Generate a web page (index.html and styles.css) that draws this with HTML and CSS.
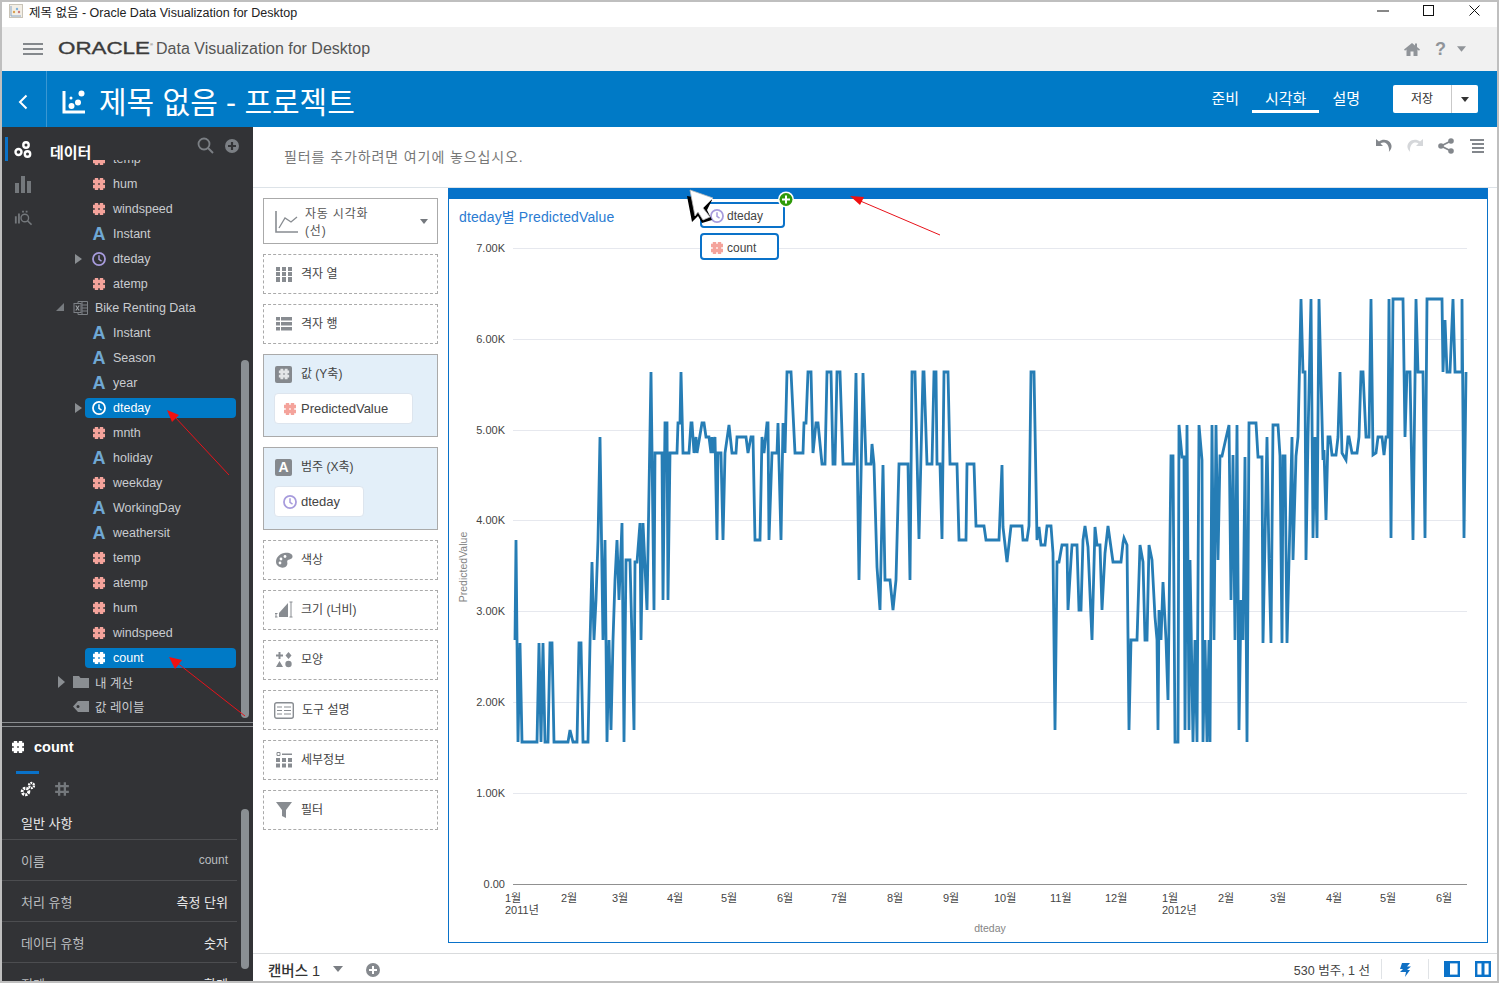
FILE: index.html
```html
<!DOCTYPE html>
<html lang="ko">
<head>
<meta charset="utf-8">
<title>제목 없음 - Oracle Data Visualization for Desktop</title>
<link rel="stylesheet" href="styles.css">
</head>
<body>
<svg class="sprite" aria-hidden="true">
  <symbol id="i-hash" viewBox="0 0 14 14"><path d="M4.500 1v12M9.500 1v12M1 4.500h12M1 9.500h12" fill="none" stroke="currentColor" stroke-width="3.400"/></symbol>
  <symbol id="i-hash-thin" viewBox="0 0 14 14"><path d="M4.500 1v12M9.500 1v12M1 4.500h12M1 9.500h12" fill="none" stroke="currentColor" stroke-width="2"/></symbol>
  <symbol id="i-clock" viewBox="0 0 16 16"><circle cx="8" cy="8" r="6.900" fill="none" stroke="currentColor" stroke-width="2"/><path d="M8 3.800v4.600l2.900 1.900" fill="none" stroke="currentColor" stroke-width="1.700"/></symbol>
</svg>
<div class="window">
  <header class="titlebar">
    <svg class="appicon" viewBox="0 0 14 14"><rect x=".5" y=".5" width="13" height="13" fill="#f3efe6" stroke="#c9c4b8"/><path d="M2 2v10h10" fill="none" stroke="#8aa7c8"/><circle cx="5" cy="8" r="1.200" fill="#d9a04e"/><circle cx="8" cy="5" r="1.200" fill="#7fb2dc"/><circle cx="10" cy="8" r="1.200" fill="#c77"/></svg>
    <span class="titletext">제목 없음 - Oracle Data Visualization for Desktop</span>
    <span class="winctl">
      <svg viewBox="0 0 12 12"><path d="M0 6h12" stroke="#111" fill="none"/></svg>
      <svg viewBox="0 0 12 12"><rect x=".5" y=".5" width="10" height="10" stroke="#111" fill="none"/></svg>
      <svg viewBox="0 0 12 12"><path d="M.5 .5l10 10M10.500 .5l-10 10" stroke="#111" fill="none"/></svg>
    </span>
  </header>
  <div class="apphead">
    <span class="burger"><i></i><i></i><i></i></span>
    <svg class="oracle" viewBox="0 0 97 16"><text x="0" y="13" textLength="92" lengthAdjust="spacingAndGlyphs">ORACLE</text><text class="reg" x="92" y="5">®</text></svg>
    <span class="appname">Data Visualization for Desktop</span>
    <span class="headicons">
      <svg class="h-home" viewBox="0 0 16 14"><path d="M8 1L0 7.600l1 1.100 1.500-1.200V14h4V9.500h3V14h4V7.500L15 8.700l1-1.100-3-2.500V1.500h-2v1.900z" fill="#909499"/></svg>
      <span class="h-q">?</span>
      <svg class="h-car" viewBox="0 0 10 6"><path d="M0 0h10L5 6z" fill="#909499"/></svg>
    </span>
  </div>
  <div class="projbar">
    <div class="back"><svg viewBox="0 0 10 16"><path d="M8.500 1.500L2 8l6.500 6.500" fill="none" stroke="#fff" stroke-width="2"/></svg></div>
    <svg class="projicon" viewBox="0 0 24 24"><path d="M2 1v21h21" fill="none" stroke="#fff" stroke-width="3"/><circle cx="9.500" cy="16" r="3" fill="#fff"/><circle cx="16" cy="12.500" r="3" fill="#fff"/><circle cx="19.500" cy="3.500" r="3" fill="#fff"/><circle cx="9" cy="8" r="1.500" fill="#fff"/></svg>
    <h1 class="projtitle">제목 없음 - 프로젝트</h1>
    <nav class="projnav">
      <a>준비</a><a class="on">시각화</a><a>설명</a>
    </nav>
    <div class="savebtn"><span class="savetxt">저장</span><span class="savecar"><svg viewBox="0 0 8 5"><path d="M0 0h8L4 5z" fill="#333"/></svg></span></div>
  </div>
  <div class="main">
    <aside class="side">
      <div class="side-top">
        <div class="rail">
          <div class="rail-item active"><svg viewBox="0 0 18 18"><g fill="none" stroke="#fff" stroke-width="2.400"><circle cx="4.500" cy="11" r="3"/><circle cx="13.500" cy="13" r="2.700"/><circle cx="12" cy="4" r="2.700"/></g></svg></div>
          <div class="rail-item"><svg viewBox="0 0 18 18"><path d="M1 8h4v10H1zM7 1h4v17H7zM13 6h4v12h-4z" fill="#74787c"/></svg></div>
          <div class="rail-item"><svg viewBox="0 0 20 20"><path d="M1 8h2v8H1zM4.500 5h2v11h-2z" fill="#74787c"/><circle cx="12" cy="10" r="4.200" fill="none" stroke="#74787c" stroke-width="1.500"/><path d="M15 13l4.500 4.500" stroke="#74787c" stroke-width="1.800"/><path d="M9 2h2v2H9zM13 2h2v2h-2z" fill="#74787c"/></svg></div>
        </div>
        <div class="treepane">
          <div class="treehead">
            <span class="treetitle">데이터</span>
            <svg class="th-search" viewBox="0 0 17 17"><circle cx="7" cy="7" r="5.500" fill="none" stroke="#7b7f84" stroke-width="1.800"/><path d="M11 11l5 5" stroke="#7b7f84" stroke-width="2"/></svg>
            <svg class="th-plus" viewBox="0 0 14 14"><circle cx="7" cy="7" r="7" fill="#7b7f84"/><path d="M7 3v8M3 7h8" stroke="#323336" stroke-width="2.200"/></svg>
          </div>
          <div class="tree">
            <div class="row"><span class="slot"></span><span class="item"><svg class="ic hash"><use href="#i-hash"/></svg>temp</span></div>
            <div class="row"><span class="slot"></span><span class="item"><svg class="ic hash"><use href="#i-hash"/></svg>hum</span></div>
            <div class="row"><span class="slot"></span><span class="item"><svg class="ic hash"><use href="#i-hash"/></svg>windspeed</span></div>
            <div class="row"><span class="slot"></span><span class="item"><b class="ic attr">A</b>Instant</span></div>
            <div class="row"><span class="slot arrow"></span><span class="item"><svg class="ic clock"><use href="#i-clock"/></svg>dteday</span></div>
            <div class="row"><span class="slot"></span><span class="item"><svg class="ic hash"><use href="#i-hash"/></svg>atemp</span></div>
            <div class="row top"><span class="tslot open"></span><svg class="fic" viewBox="0 0 16 16"><path d="M5 1.500h6l3.500 0v13H5zM9 1.500v13M9 5h5.500M9 8h5.500M9 11h5.500" fill="none" stroke="#7c8085"/><rect x="1" y="3.500" width="7" height="9" fill="#323336" stroke="#7c8085"/><path d="M2.800 5.500l3.400 5M6.200 5.500l-3.400 5" stroke="#9ca0a4" stroke-width="1.200"/></svg>Bike Renting Data</div>
            <div class="row"><span class="slot"></span><span class="item"><b class="ic attr">A</b>Instant</span></div>
            <div class="row"><span class="slot"></span><span class="item"><b class="ic attr">A</b>Season</span></div>
            <div class="row"><span class="slot"></span><span class="item"><b class="ic attr">A</b>year</span></div>
            <div class="row"><span class="slot arrow"></span><span class="item sel"><svg class="ic white"><use href="#i-clock"/></svg>dteday</span></div>
            <div class="row"><span class="slot"></span><span class="item"><svg class="ic hash"><use href="#i-hash"/></svg>mnth</span></div>
            <div class="row"><span class="slot"></span><span class="item"><b class="ic attr">A</b>holiday</span></div>
            <div class="row"><span class="slot"></span><span class="item"><svg class="ic hash"><use href="#i-hash"/></svg>weekday</span></div>
            <div class="row"><span class="slot"></span><span class="item"><b class="ic attr">A</b>WorkingDay</span></div>
            <div class="row"><span class="slot"></span><span class="item"><b class="ic attr">A</b>weathersit</span></div>
            <div class="row"><span class="slot"></span><span class="item"><svg class="ic hash"><use href="#i-hash"/></svg>temp</span></div>
            <div class="row"><span class="slot"></span><span class="item"><svg class="ic hash"><use href="#i-hash"/></svg>atemp</span></div>
            <div class="row"><span class="slot"></span><span class="item"><svg class="ic hash"><use href="#i-hash"/></svg>hum</span></div>
            <div class="row"><span class="slot"></span><span class="item"><svg class="ic hash"><use href="#i-hash"/></svg>windspeed</span></div>
            <div class="row"><span class="slot"></span><span class="item sel"><svg class="ic white"><use href="#i-hash"/></svg>count</span></div>
            <div class="row top"><span class="tslot closed"></span><svg class="fic" viewBox="0 0 16 16"><path d="M0 2h6l1.500 2H16v10H0z" fill="#8a8e92"/></svg>내 계산</div>
            <div class="row top"><span class="tslot"></span><svg class="fic" viewBox="0 0 16 16"><path d="M5 2h11v11H5L0 7.500z" fill="#8a8e92"/><circle cx="5" cy="7.500" r="1.500" fill="#323336"/></svg>값 레이블</div>
          </div>
          <span class="sbar sbar-tree"></span>
        </div>
      </div>
      <div class="props">
        <div class="ph"><svg class="ic white phic"><use href="#i-hash"/></svg><span>count</span></div>
        <div class="tabs">
          <span class="tab active"><svg viewBox="0 0 16 16"><circle cx="5.500" cy="10.500" r="3.300" fill="none" stroke="#fff" stroke-width="3" stroke-dasharray="2.200 1"/><circle cx="11.500" cy="4.500" r="2.500" fill="none" stroke="#fff" stroke-width="2.400" stroke-dasharray="1.800 .8"/></svg></span>
          <span class="tab"><svg class="ic gray"><use href="#i-hash-thin"/></svg></span>
        </div>
        <div class="prow head"><span>일반 사항</span></div>
        <div class="prow"><span>이름</span><span class="val dim">count</span></div>
        <div class="prow"><span>처리 유형</span><span class="val">측정 단위</span></div>
        <div class="prow"><span>데이터 유형</span><span class="val">숫자</span></div>
        <div class="prow"><span>집계</span><span class="val">합계</span></div>
        <span class="sbar sbar-props"></span>
      </div>
    </aside>
    <section class="content">
      <div class="filterbar">
        <span class="filtertext">필터를 추가하려면 여기에 놓으십시오.</span>
        <span class="tools">
          <svg viewBox="0 0 18 16"><path d="M1 1v7h7L5.500 5.500C8 3.500 13 4 14 11c.2 1 .2 2-.2 3 3.200-3 3.800-7 .9-10C12 1.200 7 1 4 3.500z" fill="#83878c"/></svg>
          <svg viewBox="0 0 18 16"><path d="M17 1v7h-7l2.500-2.500C10 3.500 5 4 4 11c-.2 1-.2 2 .2 3-3.200-3-3.800-7-.9-10C6 1.200 11 1 14 3.500z" fill="#d5d7da"/></svg>
          <svg viewBox="0 0 18 16"><path d="M14 3L4 8l10 5" fill="none" stroke="#83878c" stroke-width="1.800"/><circle cx="14" cy="3" r="2.800" fill="#83878c"/><circle cx="4" cy="8" r="2.800" fill="#83878c"/><circle cx="14" cy="13" r="2.800" fill="#83878c"/></svg>
          <svg viewBox="0 0 18 16"><path d="M2 2h14M4 6h12M4 10h12M4 14h12" stroke="#83878c" stroke-width="2"/></svg>
        </span>
      </div>
      <div class="work">
        <div class="grammar">
          <div class="charttype">
            <svg class="ct-ic" viewBox="0 0 23 23"><path d="M1 1v21h22" fill="none" stroke="#888c91" stroke-width="1.600"/><path d="M4 18l6-10 6 4 6-5" fill="none" stroke="#888c91" stroke-width="1.300"/></svg>
            <span class="ct-text">자동 시각화<br>(선)</span>
            <svg class="ct-car" viewBox="0 0 8 5"><path d="M0 0h8L4 5z" fill="#75797e"/></svg>
          </div>
          <div class="well"><svg class="w-ic" viewBox="0 0 18 18"><path d="M1 2h4v4H1zM7 2h4v4H7zM13 2h4v4h-4zM1 7h4v4H1zM7 7h4v4H7zM13 7h4v4h-4zM1 12h4v5H1zM7 12h4v5H7zM13 12h4v5h-4z" fill="#888c91"/></svg><span>격자 열</span></div>
          <div class="well"><svg class="w-ic" viewBox="0 0 18 18"><path d="M1 2h4v3.500H1zM6 2h11v3.500H6zM1 7h4v3.500H1zM6 7h11v3.500H6zM1 12h4v3.500H1zM6 12h11v3.500H6z" fill="#888c91"/></svg><span>격자 행</span></div>
          <div class="well filled">
            <div class="well-head"><span class="sq"><svg class="ic lite"><use href="#i-hash"/></svg></span><span>값 (Y축)</span></div>
            <div class="pill wide"><svg class="ic hash"><use href="#i-hash"/></svg>PredictedValue</div>
          </div>
          <div class="well filled">
            <div class="well-head"><span class="sq"><b>A</b></span><span>범주 (X축)</span></div>
            <div class="pill narrow"><svg class="ic clock"><use href="#i-clock"/></svg>dteday</div>
          </div>
          <div class="well"><svg class="w-ic" viewBox="0 0 18 18"><path d="M9 2c5-1 9 1 8.500 4-.4 2.500-4 2-5 3.500s1 3-1 5.500-6.500 2-9-.5S1 7 3.500 5 6 2.500 9 2z" fill="#888c91"/><circle cx="6" cy="8" r="1.400" fill="#fff"/><circle cx="10" cy="5.500" r="1.400" fill="#fff"/><circle cx="5" cy="12" r="1.400" fill="#fff"/></svg><span>색상</span></div>
          <div class="well"><svg class="w-ic" viewBox="0 0 18 18"><path d="M4 12L13 2v14H4z" fill="#888c91"/><path d="M1 12.500v3.500M0 12.500h2.500M0 16h2.500M16 1v15M14.500 1h3M14.500 16h3" stroke="#888c91" fill="none"/></svg><span>크기 (너비)</span></div>
          <div class="well"><svg class="w-ic" viewBox="0 0 18 18"><path d="M3.500 1h2v2.500H8v2H5.500V8h-2V5.500H1v-2h2.500zM13.500 1l3 3.500-3 3.500-3-3.500zM4.500 10l3.500 6H1z" fill="#888c91"/><circle cx="13.500" cy="13" r="3.200" fill="#888c91"/></svg><span>모양</span></div>
          <div class="well"><svg class="w-ic tip" viewBox="0 0 20 17"><rect x=".7" y=".7" width="18.600" height="15.600" rx="2" fill="none" stroke="#888c91" stroke-width="1.400"/><path d="M3 5h5M3 8.500h5M3 12h5M10 5h7M10 8.500h7M10 12h7" stroke="#888c91"/></svg><span>도구 설명</span></div>
          <div class="well"><svg class="w-ic" viewBox="0 0 18 18"><path d="M2 1.500h3v3H2z" fill="none" stroke="#888c91"/><path d="M7 2.500h10v1.400H7zM1 7h4v4H1zM7 7h4v4H7zM13 7h4v4h-4zM1 12.500h4v4H1zM7 12.500h4v4H7zM13 12.500h4v4h-4z" fill="#888c91"/></svg><span>세부정보</span></div>
          <div class="well"><svg class="w-ic" viewBox="0 0 18 18"><path d="M1 1h16l-6 8v8l-4-2V9z" fill="#888c91"/></svg><span>필터</span></div>
        </div>
        <div class="canvas">
          <div class="canvas-bar"></div>
          <svg class="chart" viewBox="449 199 1038 743">
            <g class="grid">
              <path d="M513 248.500H1467M513 339.500H1467M513 430.500H1467M513 520.500H1467M513 611.500H1467M513 702.500H1467M513 793.500H1467"/>
            </g>
            <path class="axis" d="M513 884.500H1467"/>
            <text class="title" x="459" y="222">dteday별 PredictedValue</text>
            <g class="ylab">
              <text x="505" y="252">7.00K</text><text x="505" y="343">6.00K</text><text x="505" y="434">5.00K</text><text x="505" y="524">4.00K</text><text x="505" y="615">3.00K</text><text x="505" y="706">2.00K</text><text x="505" y="797">1.00K</text><text x="505" y="888">0.00</text>
            </g>
            <text class="ytitle" transform="translate(467 567) rotate(-90)">PredictedValue</text>
            <g class="xlab">
              <text x="505" y="902">1월</text><text x="505" y="914">2011년</text><text x="561" y="902">2월</text><text x="612" y="902">3월</text><text x="667" y="902">4월</text><text x="721" y="902">5월</text><text x="777" y="902">6월</text><text x="831" y="902">7월</text><text x="887" y="902">8월</text><text x="943" y="902">9월</text><text x="994" y="902">10월</text><text x="1050" y="902">11월</text><text x="1105" y="902">12월</text><text x="1162" y="902">1월</text><text x="1162" y="914">2012년</text><text x="1218" y="902">2월</text><text x="1270" y="902">3월</text><text x="1326" y="902">4월</text><text x="1380" y="902">5월</text><text x="1436" y="902">6월</text>
            </g>
            <text class="xtitle" x="990" y="932">dteday</text>
            <polyline class="line" points="515,640 516,540 518,742 520,643 522,742 537,742 539,643 541,742 543,643 545,742 548,742 550,643 552,643 554,742 568,742 570,730 573,742 577,742 579,643 581,643 583,742 588,742 590,643 592,562 594,640 596,600 598,540 600,437 603,640 605,540 607,742 609,640 611,730 613,640 615,580 617,540 619,600 622,523 624,742 626,560 630,560 632,640 634,730 635,562 637,562 640,523 641,640 643,523 647,610 651,372 654,610 655,453 662,453 663,600 665,423 667,423 668,600 670,453 677,453 678,423 680,423 681,372 683,453 689,453 691,423 692,423 694,453 696,437 697,453 702,423 704,423 706,437 709,437 711,453 712,437 713,453 715,437 717,540 718,453 721,453 723,540 725,453 729,425 732,453 736,453 737,437 746,437 748,453 751,437 753,437 755,540 760,540 762,437 764,453 767,423 768,423 769,540 772,453 777,453 778,423 781,540 783,423 785,453 787,372 791,372 795,453 803,453 804,423 806,423 808,372 811,372 813,453 816,423 818,423 822,464 825,464 827,372 831,372 833,464 835,464 837,372 840,372 843,464 854,464 856,373 859,580 863,373 866,464 871,464 872,444 874,464 877,567 880,610 883,465 885,580 890,580 893,610 896,580 899,464 908,464 910,580 912,372 915,372 919,539 923,372 924,372 927,464 932,464 934,372 936,372 937,464 940,464 942,539 944,372 948,372 950,464 957,464 959,540 966,540 967,464 974,464 976,526 984,526 986,540 999,540 1002,465 1003,527 1007,562 1011,526 1022,526 1023,540 1027,540 1029,526 1031,372 1034,372 1037,540 1039,527 1041,545 1045,545 1047,526 1051,526 1053,553 1055,730 1057,562 1059,562 1062,545 1067,545 1068,610 1071,560 1072,545 1077,545 1079,610 1081,610 1083,540 1085,526 1088,547 1092,640 1095,527 1097,545 1100,545 1102,610 1105,553 1108,526 1113,562 1121,562 1123,543 1124,538 1127,545 1129,730 1131,640 1137,640 1140,545 1143,562 1145,640 1147,640 1149,545 1152,560 1155,617 1157,640 1158,730 1159,610 1161,640 1163,582 1166,640 1168,700 1171,456 1173,456 1175,742 1178,742 1179,425 1182,457 1184,457 1185,730 1187,425 1189,730 1190,560 1193,742 1195,640 1197,742 1199,425 1202,460 1203,742 1205,640 1207,742 1209,640 1210,742 1212,425 1214,640 1216,425 1218,560 1220,456 1222,456 1226,438 1229,425 1231,600 1233,455 1235,640 1237,425 1239,730 1241,600 1243,640 1245,457 1247,742 1249,423 1256,423 1258,457 1262,457 1263,643 1267,437 1269,560 1271,643 1273,425 1278,425 1280,456 1282,643 1283,456 1285,456 1287,643 1292,437 1293,560 1296,456 1298,437 1301,299 1303,372 1305,372 1306,560 1308,437 1311,299 1313,538 1315,437 1317,538 1319,299 1323,460 1324,450 1326,520 1328,437 1330,437 1332,455 1336,455 1338,437 1340,372 1342,453 1346,460 1348,437 1349,437 1352,453 1357,453 1359,437 1361,372 1363,372 1366,437 1369,437 1371,299 1373,455 1376,453 1378,437 1382,437 1384,455 1386,437 1388,437 1389,299 1391,538 1393,299 1403,299 1405,437 1407,372 1410,372 1413,540 1416,299 1418,372 1423,372 1425,538 1427,299 1442,299 1443,372 1445,320 1447,372 1450,372 1453,299 1455,372 1462,372 1462,299 1464,538 1466,372"/>
          </svg>
          <div class="chip chip-a"><svg class="ic clock"><use href="#i-clock"/></svg>dteday</div>
          <div class="chip chip-b"><svg class="ic hash"><use href="#i-hash"/></svg>count</div>
        </div>
      </div>
      <footer class="footer">
        <span class="cvname">캔버스 1</span>
        <svg class="cvcar" viewBox="0 0 10 6"><path d="M0 0h10L5 6z" fill="#7a7e83"/></svg>
        <svg class="cvplus" viewBox="0 0 14 14"><circle cx="7" cy="7" r="7" fill="#85898e"/><path d="M7 3v8M3 7h8" stroke="#fff" stroke-width="2"/></svg>
        <span class="fstat">530 범주, 1 선</span>
        <span class="fsep"></span>
        <svg class="fbolt" viewBox="0 0 12 14"><path d="M3 0h8L8 3.500h4L8 7h3l-5 7 1-5H1l3-3H1z" fill="#1070c4"/></svg>
        <span class="fsep"></span>
        <svg class="fpanel" viewBox="0 0 16 16"><rect x="1.200" y="1.200" width="13.600" height="13.600" fill="none" stroke="#0a72c9" stroke-width="2.400"/><rect x="1" y="1" width="5" height="14" fill="#0a72c9"/></svg>
        <svg class="fpanel" viewBox="0 0 16 16"><rect x="1.200" y="1.200" width="13.600" height="13.600" fill="none" stroke="#0a72c9" stroke-width="2.400"/><rect x="6.500" y="1" width="3" height="14" fill="#0a72c9"/></svg>
      </footer>
    </section>
  </div>
</div>
<svg class="overlay" viewBox="0 0 1499 983" aria-hidden="true">
  <g class="arrows">
    <path d="M940 235L858 200"/><polygon points="850,196 864,197 860,205"/>
    <path d="M229 475L174 416"/><polygon points="167,410 179,415 172,422"/>
    <path d="M245 716L176 662"/><polygon points="169,657 182,660 175,669"/>
  </g>
  <circle cx="786" cy="199.500" r="8" fill="#fff"/><circle cx="786" cy="199.500" r="6.500" fill="#2f9a0a"/><path d="M786 195.500v8M782 199.500h8" stroke="#fff" stroke-width="2"/>
  <polygon points="687,196 692,222 698,216 702,223 712,220 707,210 712,200" fill="#000"/>
  <polygon points="690,190 713,198 703,208 710,217 703,220 698,212 695,216" fill="#fff" stroke="#bbb" stroke-width=".8"/>
</svg>
</body>
</html>
```
FILE: styles.css
```css
* { box-sizing: border-box; }
html, body { margin: 0; padding: 0; height: 100%; overflow: hidden; }
body { font-family: "Liberation Sans", "Noto Sans CJK KR", sans-serif; font-size: 12px; color: #333; background: #fff; position: relative; }
.sprite { position: absolute; width: 0; height: 0; }
.window { width: 1499px; height: 983px; border: 2px solid #bfbfbf; display: flex; flex-direction: column; background: #fff; }

.titlebar { height: 25px; display: flex; align-items: center; padding: 0 0 7px 7px; flex: none; }
.appicon { width: 14px; height: 14px; margin-right: 6px; }
.titletext { font-size: 12.500px; color: #222; }
.winctl { margin-left: auto; display: flex; align-items: center; padding-right: 16px; gap: 34px; }
.winctl svg { width: 12px; height: 12px; display: block; }

.apphead { height: 44px; background: #f1f1f1; display: flex; align-items: center; flex: none; padding-left: 21px; }
.burger { width: 20px; display: flex; flex-direction: column; gap: 3px; margin-right: 15px; }
.burger i { display: block; height: 2px; background: #84888c; }
.oracle { width: 97px; height: 16px; margin-right: 1px; overflow: visible; }
.oracle text { font-size: 17px; font-weight: 400; fill: #3b3b3b; stroke: #3b3b3b; stroke-width: .35px; font-family: "Liberation Sans", sans-serif; }
.oracle .reg { font-size: 4px; stroke: none; }
.appname { font-size: 16px; color: #555; }
.headicons { margin-left: auto; display: flex; align-items: center; padding-right: 31px; }
.h-home { width: 16px; height: 14px; margin-right: 15px; margin-left: -1px; }
.h-q { font-size: 18px; font-weight: 700; color: #909499; margin-right: 11px; line-height: 1; }
.h-car { width: 9px; height: 6px; }

.projbar { height: 56px; background: #007ac6; display: flex; align-items: center; flex: none; color: #fff; }
.back { width: 45px; height: 56px; border-right: 1px solid #3a97d2; display: flex; align-items: center; justify-content: center; }
.back svg { width: 10px; height: 16px; margin-top: 6px; margin-right: 3px; }
.projicon { width: 24px; height: 24px; margin: 5px 13px 0 15px; }
.projtitle { font-size: 30px; font-weight: 400; margin: 8px 0 0; line-height: 1; }
.projnav { margin-left: auto; display: flex; height: 56px; align-items: center; }
.projnav a { font-size: 15px; color: #fff; padding: 0 13px; height: 28px; line-height: 28px; border-bottom: 3px solid transparent; }
.projnav a.on { border-bottom-color: #fff; }
.savebtn { width: 85px; height: 28px; background: #fff; border-radius: 2px; display: flex; margin: 0 19px 0 20px; color: #333; }
.savetxt { width: 59px; border-right: 1px solid #c9c9c9; text-align: center; line-height: 28px; font-size: 12px; }
.savecar { flex: 1; display: flex; align-items: center; justify-content: center; }
.savecar svg { width: 8px; height: 5px; }

.main { flex: 1; display: flex; min-height: 0; }
.side { width: 251px; flex: none; background: #323336; display: flex; flex-direction: column; color: #c9ccd0; position: relative; }
.side-top { height: 596px; flex: none; display: flex; border-bottom: 1px solid #8a8d90; }
.rail { width: 43px; flex: none; padding-top: 6px; }
.rail-item { height: 34px; display: flex; align-items: center; padding-left: 12px; position: relative; }
.rail-item svg { width: 18px; height: 18px; }
.rail-item.active::before { content: ""; position: absolute; left: 3px; top: 4px; width: 3px; height: 24px; background: #0a72c9; }
.treepane { flex: 1; min-width: 0; display: flex; flex-direction: column; position: relative; }
.treehead { height: 33px; flex: none; display: flex; align-items: center; background: #323336; position: relative; padding-left: 5px; padding-top: 18px; overflow: visible; z-index: 1; }
.treetitle { font-size: 15px; font-weight: 700; color: #fff; line-height: 15px; }
.th-search { width: 17px; height: 17px; margin-left: auto; margin-top: -14px; margin-right: 11px; }
.th-plus { width: 14px; height: 14px; margin-right: 14px; margin-top: -14px; }
.tree { flex: 1; overflow: hidden; }
.row { height: 25px; display: flex; align-items: center; padding-right: 17px; font-size: 12.500px; color: #c9ccd0; white-space: nowrap; }
.row:first-child { margin-top: -14px; }
.slot { width: 40px; height: 20px; flex: none; position: relative; }
.slot.arrow::after { content: ""; position: absolute; left: 30px; top: 5px; border-left: 7px solid #8a8e92; border-top: 5px solid transparent; border-bottom: 5px solid transparent; }
.item { flex: 1; height: 20px; display: flex; align-items: center; padding-left: 7px; border-radius: 4px; }
.item.sel { background: #007ac6; color: #fff; }
.ic { width: 14px; height: 14px; flex: none; margin-right: 7px; display: inline-block; }
.hash { color: #f4a39b; }
.clock { color: #a79bdc; }
.white { color: #fff; }
.gray { color: #74787c; margin-right: 0; }
.lite { color: #e3e5e7; margin-right: 0; width: 12px; height: 12px; }
.attr { color: #6fa8d4; font-size: 18px; line-height: 14px; font-weight: 700; text-align: center; }
.row.top { padding-left: 10px; height: 24px; }
.row.top:last-child { height: 25px; }
.tslot { width: 18px; height: 14px; flex: none; position: relative; }
.tslot.open::after { content: ""; position: absolute; left: 1px; top: 2px; border-left: 8px solid transparent; border-bottom: 8px solid #777b7f; }
.tslot.closed::after { content: ""; position: absolute; left: 3px; top: 1px; border-left: 7px solid #8a8e92; border-top: 6px solid transparent; border-bottom: 6px solid transparent; }
.fic { width: 16px; height: 16px; flex: none; margin-right: 6px; }
.sbar { position: absolute; width: 8px; background: #8a8f93; border-radius: 4px; }
.sbar-tree { left: 196px; top: 233px; height: 358px; }
.sbar-props { left: 239px; top: 82px; height: 160px; }

.props { flex: 1; min-height: 0; margin-top: 3px; border-top: 1px solid #8a8d90; overflow: hidden; position: relative; }
.ph { height: 44px; display: flex; align-items: center; padding: 0 0 4px 9px; font-size: 14.500px; font-weight: 700; color: #fff; }
.phic { margin-right: 9px; }
.tabs { height: 33px; display: flex; padding-left: 14px; gap: 11px; }
.tab { width: 23px; border-top: 3px solid transparent; display: flex; align-items: center; justify-content: center; }
.tab.active { border-top-color: #0a72c9; }
.tab svg { width: 16px; height: 16px; margin-right: 0; }
.prow { width: 235px; height: 41px; flex: none; border-bottom: 1px solid #4c4d50; display: flex; align-items: center; justify-content: space-between; padding: 0 9px 0 19px; font-size: 13px; color: #b9bcbf; }
.prow.head { height: 36px; color: #e8e9ea; padding-top: 1px; }
.val { color: #e8e9ea; }
.val.dim { color: #b9bcbf; font-size: 12px; }

.content { flex: 1; min-width: 0; display: flex; flex-direction: column; }
.filterbar { height: 61px; flex: none; border-bottom: 1px solid #dde3e8; display: flex; padding: 23px 11px 0 31px; position: relative; }
.filtertext { font-size: 14px; letter-spacing: .9px; color: #777; line-height: 15px; }
.tools { margin-left: auto; margin-top: -12px; display: flex; gap: 13px; height: 16px; }
.tools svg { width: 18px; height: 16px; }
.work { flex: 1; min-height: 0; display: flex; padding-bottom: 10px; }
.grammar { width: 195px; flex: none; padding: 10px 10px 0; display: flex; flex-direction: column; gap: 10px; }
.charttype { height: 46px; flex: none; border: 1px solid #aaa; display: flex; align-items: center; padding-left: 11px; font-size: 12px; color: #555; }
.ct-ic { width: 23px; height: 23px; margin-right: 7px; }
.ct-text { line-height: 17px; letter-spacing: .8px; padding-top: 4px; }
.ct-car { width: 8px; height: 5px; margin-left: auto; margin-right: 9px; }
.well { height: 40px; flex: none; border: 1px dashed #aaa; display: flex; align-items: center; padding-left: 11px; font-size: 12px; color: #444; }
.well > span, .well-head > span:last-child { position: relative; top: -2px; }
.w-ic { width: 18px; height: 18px; margin-right: 8px; flex: none; }
.w-ic.tip { width: 20px; height: 17px; margin-left: -1px; }
.well.filled { height: 83px; border: 1px solid #aaa; background: #e3eff9; display: block; padding: 0 0 0 10px; }
.well-head { height: 38px; display: flex; align-items: center; padding-left: 1px; }
.sq { width: 17px; height: 17px; border-radius: 2px; background: #85898e; display: flex; align-items: center; justify-content: center; margin-right: 9px; color: #fff; }
.sq b { font-size: 14px; line-height: 1; }
.pill { height: 31px; background: #fff; border: 1px solid #dde5ee; border-radius: 4px; display: flex; align-items: center; padding-left: 8px; font-size: 13px; color: #444; }
.pill .ic { margin-right: 4px; }
.pill.wide { width: 139px; }
.pill.narrow { width: 90px; }

.canvas { flex: 1; min-width: 0; margin-right: 9px; border: 1px solid #0a72c9; border-top: none; position: relative; display: flex; flex-direction: column; }
.canvas-bar { height: 11px; flex: none; background: #0572c9; }
.chart { display: block; flex: 1; width: 100%; min-height: 0; }
.grid path { stroke: #e6e8ee; fill: none; }
.axis { stroke: #909090; fill: none; }
.chart text { font-family: "Liberation Sans", "Noto Sans CJK KR", sans-serif; }
.title { font-size: 14px; fill: #2a7bd2; letter-spacing: .12px; }
.ylab text { font-size: 11px; fill: #444; text-anchor: end; }
.xlab text { font-size: 11px; fill: #444; }
.ytitle { font-size: 10.500px; fill: #858585; text-anchor: middle; }
.xtitle { font-size: 10.500px; fill: #858585; text-anchor: middle; }
.line { fill: none; stroke: #267db5; stroke-width: 2.800; stroke-linejoin: miter; }
.chip { position: absolute; background: #fff; border: 2px solid #0a72c9; border-radius: 4px; display: flex; align-items: center; padding: 2px 0 0 8px; font-size: 12px; color: #444; }
.chip .ic { margin-right: 3px; }
.chip-a { left: 251px; top: 14px; width: 85px; height: 26px; }
.chip-b { left: 251px; top: 45px; width: 79px; height: 27px; }

.footer { height: 28px; flex: none; border-top: 1px solid #d9dbdd; display: flex; align-items: center; padding: 3px 6px 0 15px; }
.cvname { font-size: 14.500px; color: #333; font-weight: 500; }
.cvcar { width: 10px; height: 6px; margin-left: 13px; }
.cvplus { width: 14px; height: 14px; margin-left: 23px; margin-top: 2px; }
.fstat { margin-left: auto; font-size: 12.500px; color: #444; }
.fsep { width: 1px; height: 20px; background: #e0e3e6; margin: 0 11px; }
.fbolt { width: 12px; height: 14px; margin: 2px 6px 0; }
.fpanel { width: 16px; height: 16px; margin-left: 15px; }
.fsep + .fpanel { margin-left: 4px; }

.overlay { position: absolute; left: 0; top: 0; width: 1499px; height: 983px; pointer-events: none; }
.arrows path { stroke: #e8121a; fill: none; }
.arrows polygon { fill: #f01010; }
```
